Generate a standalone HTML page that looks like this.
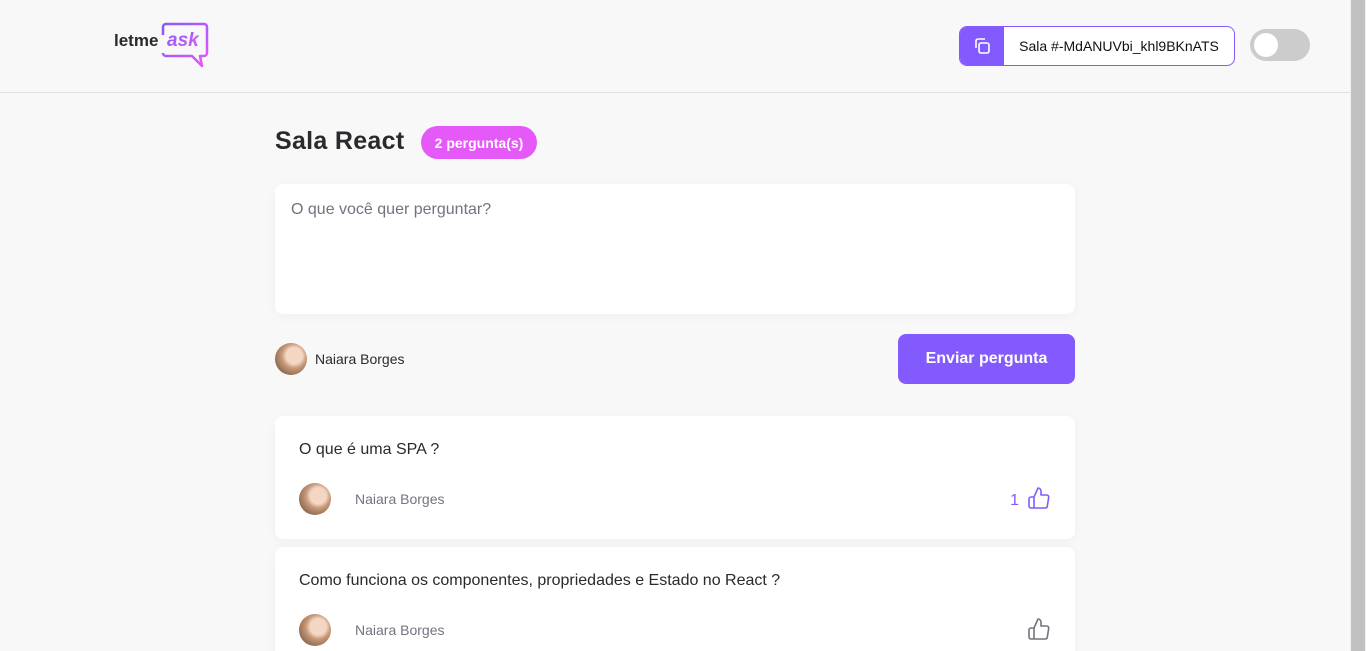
<!DOCTYPE html>
<html style="overflow:hidden"><head><meta charset="utf-8"><style>
*{box-sizing:border-box;margin:0;padding:0}
html,body{width:1366px;height:651px;overflow:hidden}
body{background:#f8f8f8;font-family:"Liberation Sans",sans-serif;position:relative;color:#29292e}
.sb{position:absolute;right:0;top:0;width:16px;height:651px;background:#f1f1f1}
.sb div{position:absolute;left:1px;right:1px;top:0;height:651px;background:#c1c1c1}
header{position:absolute;left:0;top:0;width:1350px;height:93px;border-bottom:1px solid #e2e2e2}
.logo{position:absolute;left:114px;top:22px}
.code{position:absolute;left:959px;top:26px;width:276px;height:40px;border:1px solid #835afd;border-radius:8px;background:#fff;overflow:hidden;display:flex}
.code .ic{width:44px;background:#835afd;display:flex;align-items:center;justify-content:center}
.code span{flex:1;display:flex;align-items:center;justify-content:center;font-size:14px;color:#111}
.tog{position:absolute;left:1250px;top:29px;width:60px;height:32px;border-radius:16px;background:#ccc}
.tog div{position:absolute;left:4px;top:4px;width:24px;height:24px;border-radius:50%;background:#fff}
h1{position:absolute;left:275px;top:127px;font-size:25px;font-weight:bold;color:#29292e;letter-spacing:0.3px}
.badge{position:absolute;left:421px;top:126px;width:116px;height:33px;border-radius:17px;background:#e559f9;color:#fff;font-size:14px;font-weight:bold;display:flex;align-items:center;justify-content:center}
.ta{position:absolute;left:275px;top:184px;width:800px;height:130px;background:#fff;border-radius:8px;box-shadow:0 2px 12px rgba(0,0,0,.04);padding:17px 16px;font-size:16px;color:#737380}
.av{width:32px;height:32px;border-radius:50%;background:radial-gradient(circle at 60% 40%,#f3d6c4 0 30%,#c89a7a 45%,#8e6a50 75%,#b89878)}
.user{position:absolute;left:275px;top:343px;display:flex;align-items:center;gap:8px;font-size:14px}
.btn{position:absolute;left:898px;top:334px;width:177px;height:50px;border-radius:8px;background:#835afd;color:#fff;font-size:16px;font-weight:bold;display:flex;align-items:center;justify-content:center}
.q{position:absolute;left:275px;width:800px;background:#fff;border-radius:8px;box-shadow:0 2px 12px rgba(0,0,0,.04);padding:24px}
.q p{font-size:16px;color:#29292e;margin-top:1px}
.q .f{position:absolute;left:24px;top:67px;display:flex;align-items:center;gap:24px;font-size:14px;color:#737380}
.q .like{position:absolute;right:24px;top:70px;display:flex;align-items:flex-end;gap:8px;color:#835afd;font-size:16px}
</style></head><body>
<header>
<svg class="logo" width="96" height="46" viewBox="0 0 96 46">
<defs><linearGradient id="g" x1="0" x2="1" y1="0" y2="1"><stop offset="0" stop-color="#835afd"/><stop offset="1" stop-color="#e559f9"/></linearGradient></defs>
<path d="M49 13V5a3 3 0 0 1 3-3h38a3 3 0 0 1 3 3v26a3 3 0 0 1-3 3h-4l2 10-10-10H52a3 3 0 0 1-3-3" fill="none" stroke="url(#g)" stroke-width="2.5" stroke-linejoin="round"/>
<text x="0" y="24" font-family="Liberation Sans" font-weight="bold" font-size="17" fill="#29292e">letme</text>
<text x="53" y="24" font-family="Liberation Sans" font-weight="bold" font-style="italic" font-size="19" fill="url(#g)">ask</text>
</svg>
<div class="code"><div class="ic"><svg width="20" height="20" viewBox="0 0 20 20" fill="none" stroke="#fff" stroke-width="1.6"><rect x="7" y="7" width="10" height="10" rx="2"/><path d="M4 12V5a2 2 0 0 1 2-2h7"/></svg></div><span>Sala #-MdANUVbi_khl9BKnATS</span></div>
<div class="tog"><div></div></div>
</header>
<h1>Sala React</h1>
<div class="badge">2 pergunta(s)</div>
<div class="ta">O que você quer perguntar?</div>
<div class="user"><div class="av"></div>Naiara Borges</div>
<div class="btn">Enviar pergunta</div>
<div class="q" style="top:416px;height:123px"><p>O que é uma SPA ?</p>
<div class="f"><div class="av"></div>Naiara Borges</div>
<div class="like"><span>1</span><svg width="24" height="24" viewBox="0 0 24 24" fill="none" stroke="#835afd" stroke-width="1.6" stroke-linejoin="round"><path d="M7 22H4a2 2 0 0 1-2-2v-7a2 2 0 0 1 2-2h3M14 9V5a3 3 0 0 0-3-3l-4 9v11h11.3a2 2 0 0 0 2-1.7l1.4-9A2 2 0 0 0 19.7 9z"/></svg></div></div>
<div class="q" style="top:547px;height:130px"><p>Como funciona os componentes, propriedades e Estado no React ?</p>
<div class="f"><div class="av"></div>Naiara Borges</div>
<div class="like"><svg width="24" height="24" viewBox="0 0 24 24" fill="none" stroke="#737380" stroke-width="1.6" stroke-linejoin="round"><path d="M7 22H4a2 2 0 0 1-2-2v-7a2 2 0 0 1 2-2h3M14 9V5a3 3 0 0 0-3-3l-4 9v11h11.3a2 2 0 0 0 2-1.7l1.4-9A2 2 0 0 0 19.7 9z"/></svg></div></div>
<div class="sb"><div></div></div>
</body></html>
